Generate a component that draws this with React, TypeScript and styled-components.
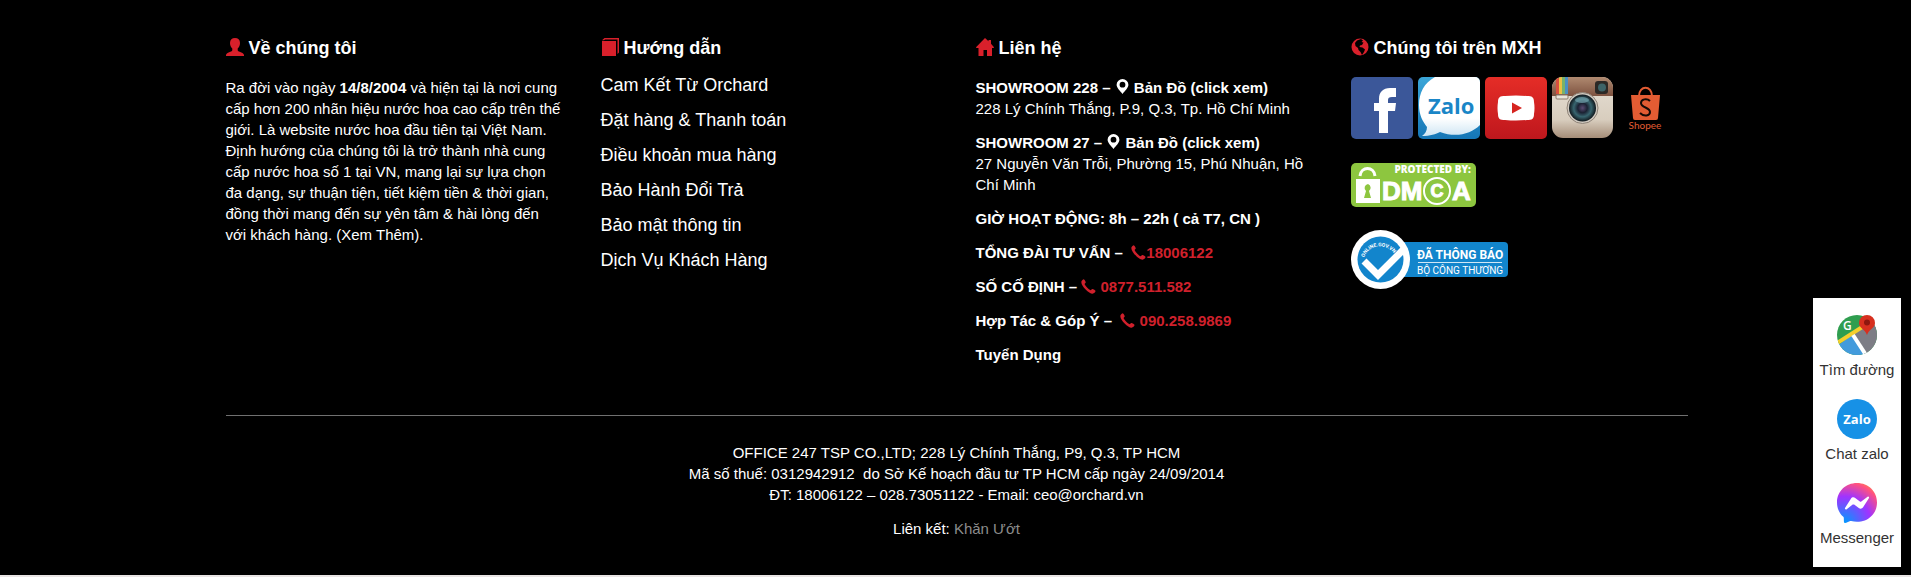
import React from "react";
import styled, { createGlobalStyle } from "styled-components";

const GlobalStyle = createGlobalStyle`
  body {
    margin: 0;
    background: #e9e5e5;
    font-family: "Liberation Sans", Arial, sans-serif;
    font-size: 15px;
    line-height: 21px;
  }
  a {
    color: inherit;
    text-decoration: none;
  }
`;

const Footer = styled.footer`
  background: #000;
  color: #fff;
  padding: 38px 20px 36px 22px;
`;

const Container = styled.div`
  max-width: 1462px;
  margin: 0 auto;
`;

const Columns = styled.div`
  display: grid;
  grid-template-columns: repeat(4, minmax(0, 1fr));
  column-gap: 38px;
  padding-bottom: 37px;
  border-bottom: 1px solid #707070;

  @media (max-width: 1100px) {
    grid-template-columns: repeat(2, minmax(0, 1fr));
    row-gap: 32px;
  }
`;

const Column = styled.section`
  min-width: 0;
`;

const Heading = styled.h4`
  display: flex;
  align-items: center;
  gap: 5px;
  margin: 0 0 19px;
  font-size: 18px;
  line-height: 20px;
  font-weight: 700;
`;

const HeadingIcon = styled.svg`
  flex: none;
  width: 18px;
  height: 18px;
  margin-bottom: 2px;
  fill: #d9202b;
`;

const Paragraph = styled.p`
  margin: 0 0 13px;
`;

const LinkList = styled.ul`
  list-style: none;
  margin: -9px 0 0;
  padding: 0;
  font-size: 18px;
  line-height: 35px;
`;

const PinIcon = styled.svg`
  width: 15px;
  height: 15px;
  vertical-align: -1px;
  fill: #fff;
`;

const PhoneLink = styled.a`
  color: #d0202c;
`;

const PhoneIcon = styled.svg`
  width: 15px;
  height: 15px;
  vertical-align: -2px;
  fill: currentColor;
`;

const SocialRow = styled.div`
  display: flex;
  gap: 5px;
  margin-bottom: 24px;

  a,
  svg {
    display: block;
  }
`;

const Badge = styled.a`
  display: block;
  margin-bottom: 23px;

  svg {
    display: block;
  }
`;

const Company = styled.div`
  padding-top: 26px;
  text-align: center;
  color: #fff;

  p:last-child {
    margin: 0;
  }
`;

const MutedLink = styled.a`
  && {
    color: #8c8c8c;
  }
`;

const ContactDock = styled.nav`
  position: fixed;
  right: 10px;
  bottom: 10px;
  display: flex;
  flex-direction: column;
  align-items: center;
  gap: 21px;
  box-sizing: border-box;
  width: 88px;
  padding: 17px 0 21px;
  background: #fff;
  color: #333;
`;

const DockLink = styled.a`
  display: flex;
  flex-direction: column;
  align-items: center;
  gap: 7px;
  line-height: 16px;
  white-space: nowrap;
`;

const Pin = () => (
  <PinIcon viewBox="0 0 15 15" aria-hidden="true">
    <path
      fillRule="evenodd"
      d="M7.500 0A5.900 5.900 0 0 0 1.600 5.800C1.600 9 5.200 12 7.500 15 9.800 12 13.400 9 13.400 5.800A5.900 5.900 0 0 0 7.500 0Zm0 2.800a2.900 2.900 0 1 1 0 5.800 2.900 2.900 0 0 1 0-5.800Z"
    />
  </PinIcon>
);

const Phone = () => (
  <PhoneIcon viewBox="0 0 15 15" aria-hidden="true">
    <path d="M.4 2.600C.8 1.300 2 .2 2.800.2c.6 0 2 2.500 1.900 3.200-.1.800-1.200 1-1.100 1.700.3 1.500 4.400 5.800 5.900 6.100.7.1 1-1 1.700-1.200.8-.2 3.500 1.400 3.400 2.100-.1 1.100-1.800 2.500-3 2.600C8.200 14.900-.4 6.500.4 2.600Z" />
  </PhoneIcon>
);

const guideLinks = [
  "Cam Kết Từ Orchard",
  "Đặt hàng & Thanh toán",
  "Điều khoản mua hàng",
  "Bảo Hành Đổi Trả",
  "Bảo mật thông tin",
  "Dịch Vụ Khách Hàng",
];

const FacebookIcon = () => (
  <svg width="62" height="62" viewBox="0 0 62 62" aria-hidden="true">
    <rect width="62" height="62" rx="5" fill="#3b5799" />
    <path
      fill="#fff"
      d="M28 56V34h-5v-8h5v-4c0-7 4-11 11-11h6v9h-4c-3 0-4 1-4 3v3h8l-1 8h-7v22Z"
    />
  </svg>
);

const ZaloIcon = () => (
  <svg width="62" height="62" viewBox="0 0 62 62" aria-hidden="true">
    <defs>
      <linearGradient id="zaloBack" x1="0" y1="0" x2="0" y2="1">
        <stop offset="0" stopColor="#3ba6d8" />
        <stop offset="1" stopColor="#1576b6" />
      </linearGradient>
      <linearGradient id="zaloBubble" x1="0" y1="0" x2="0" y2="1">
        <stop offset="0.7" stopColor="#fff" />
        <stop offset="1" stopColor="#cfe6f4" />
      </linearGradient>
      <clipPath id="zaloClip">
        <rect width="62" height="62" rx="5" />
      </clipPath>
    </defs>
    <g clipPath="url(#zaloClip)">
      <rect width="62" height="62" fill="url(#zaloBack)" />
      <path
        fill="url(#zaloBubble)"
        d="M17 0C6 6 1 16 1 28c0 10 4 17 8 22 0 4-2 7-5 9 8 0 14-2 18-4 16 6 31 2 40-7V0Z"
      />
    </g>
    <text x="10" y="37" fill="#1a86c7" fontFamily="Open Sans, sans-serif" fontSize="22" fontWeight="700">
      Zalo
    </text>
  </svg>
);

const YoutubeIcon = () => (
  <svg width="62" height="62" viewBox="0 0 62 62" aria-hidden="true">
    <defs>
      <linearGradient id="ytBack" x1="0" y1="0" x2="0" y2="1">
        <stop offset="0" stopColor="#e52d27" />
        <stop offset="1" stopColor="#bf171d" />
      </linearGradient>
    </defs>
    <rect width="62" height="62" rx="5" fill="url(#ytBack)" />
    <path
      fill="#fff"
      d="M20 19q11-1 22 0c5 0 7 1 7 6q1 6 0 12c0 5-2 6-7 6q-11 1-22 0c-5 0-7-1-7-6q-1-6 0-12c0-5 2-6 7-6Z"
    />
    <path fill="#d6241f" d="M27 25.500 37 31l-10 5.500Z" />
  </svg>
);

const InstagramIcon = () => (
  <svg width="62" height="62" viewBox="0 0 62 62" aria-hidden="true">
    <defs>
      <linearGradient id="igTop" x1="0" y1="0" x2="0" y2="1">
        <stop offset="0" stopColor="#b08a70" />
        <stop offset="1" stopColor="#7d5240" />
      </linearGradient>
      <linearGradient id="igBody" x1="0" y1="0" x2="0" y2="1">
        <stop offset="0" stopColor="#e6e0d5" />
        <stop offset="0.7" stopColor="#d8cdbe" />
        <stop offset="1" stopColor="#a58d78" />
      </linearGradient>
      <radialGradient id="igLens">
        <stop offset="0" stopColor="#5a4a72" />
        <stop offset="0.35" stopColor="#1b2233" />
        <stop offset="0.65" stopColor="#37656f" />
        <stop offset="1" stopColor="#10171c" />
      </radialGradient>
      <clipPath id="igClip">
        <rect width="61" height="61" rx="11" />
      </clipPath>
    </defs>
    <g clipPath="url(#igClip)">
      <rect width="61" height="61" fill="url(#igBody)" />
      <rect width="61" height="19" fill="url(#igTop)" />
      <rect x="4" width="3" height="17" fill="#d8503f" />
      <rect x="7" width="3" height="17" fill="#ecc043" />
      <rect x="10" width="3" height="17" fill="#79b26a" />
      <rect x="13" width="3" height="17" fill="#4b8fc4" />
      <rect x="4" y="18" width="12" height="4" rx="1" fill="#e9e4da" stroke="#8b7a6c" />
    </g>
    <rect x="43" y="4" width="13" height="13" rx="3" fill="#2c2926" />
    <circle cx="50" cy="10.500" r="4" fill="#3e6468" />
    <circle cx="30.500" cy="31" r="15.500" fill="#cfc9c0" stroke="#8f8377" />
    <circle cx="30.500" cy="31" r="13.500" fill="url(#igLens)" />
    <ellipse cx="30" cy="23" rx="7" ry="3" fill="#7fb0ba" opacity="0.6" />
  </svg>
);

const ShopeeIcon = () => (
  <svg width="62" height="62" viewBox="0 0 62 62" aria-hidden="true">
    <path fill="#e35c33" d="M12 18h29l-2 23q0 2-2 2H16q-2 0-2-2Z" />
    <path fill="none" stroke="#e35c33" strokeWidth="2" d="M20 19c0-11 13-11 13 0" />
    <path
      fill="none"
      stroke="#150a06"
      strokeWidth="2"
      d="M31 24c-3-3-9-2-9 2 0 5 9 4 9 9 0 4-6 5-10 1"
    />
    <text x="26" y="52" fill="#e35c33" fontFamily="Lato, sans-serif" fontSize="10" textAnchor="middle">
      Shopee
    </text>
  </svg>
);

const DmcaBadge = () => (
  <svg width="125" height="44" viewBox="0 0 125 44" aria-hidden="true">
    <rect width="125" height="44" rx="5" fill="#8dc63f" />
    <path fill="none" stroke="#fff" strokeWidth="3" d="M9 13C10 3 23 3 24 13" />
    <rect x="5" y="16" width="24" height="24" fill="#fff" />
    <path fill="#8dc63f" d="M17 21a4 4 0 0 0-2 7l-2 7h7l-2-7a4 4 0 0 0-1-7Z" />
    <g fill="#fff" stroke="#fff" fontFamily="Liberation Sans, Arial, sans-serif" fontWeight="700">
      <text x="120" y="10" fontSize="10" fontFamily="Open Sans, sans-serif" fontWeight="800" stroke="none" textAnchor="end">
        PROTECTED BY:
      </text>
      <text x="31" y="37" fontSize="26">
        DM
      </text>
      <text x="86" y="34" fontSize="18" textAnchor="middle">
        C
      </text>
      <text x="101" y="37" fontSize="26">
        A
      </text>
    </g>
    <circle cx="86" cy="28" r="13" fill="none" stroke="#fff" strokeWidth="2" />
  </svg>
);

const TradeBadge = () => (
  <svg width="157" height="59" viewBox="0 0 157 59" aria-hidden="true">
    <defs>
      <path id="tradeArc" d="M13 27.500a17 17 0 0 1 32 0" />
    </defs>
    <rect x="40" y="12" width="117" height="35" rx="4" fill="#1285cc" />
    <circle cx="29.500" cy="29.500" r="29.500" fill="#fff" />
    <circle cx="29.500" cy="29.500" r="23" fill="#1285cc" />
    <path fill="none" stroke="#fff" strokeWidth="7" d="M13 31l14 14 27-27" />
    <text fill="#fff" fontFamily="Roboto, sans-serif" fontSize="5" fontWeight="700">
      <textPath href="#tradeArc">ONLINE.GOV.VN</textPath>
    </text>
    <text x="66" y="29" fill="#fff" fontFamily="Roboto, sans-serif" fontSize="12" fontWeight="700">
      ĐÃ THÔNG BÁO
    </text>
    <rect x="67" y="32" width="84" height="1" fill="#cfe7f6" />
    <text x="66" y="44" fill="#fff" fontFamily="Roboto, sans-serif" fontSize="10">
      BỘ CÔNG THƯƠNG
    </text>
  </svg>
);

const MapIcon = () => (
  <svg width="40" height="40" viewBox="0 0 40 40" aria-hidden="true">
    <defs>
      <clipPath id="mapClip">
        <circle cx="20" cy="20" r="20" />
      </clipPath>
    </defs>
    <g clipPath="url(#mapClip)">
      <rect width="40" height="40" fill="#2f9e4f" />
      <path fill="#7d7d85" d="M16 20 40 0v40H28Z" />
      <path fill="#439bdc" d="M0 31l15-11 13 20H0Z" />
      <path stroke="#f5cf2c" strokeWidth="4" d="M0 28 30 9" />
      <path stroke="#fff" strokeWidth="4" d="m16 20 13 20" />
    </g>
    <text x="6" y="15" fill="#fff" fontFamily="Open Sans, sans-serif" fontSize="12" fontWeight="600">
      G
    </text>
    <path fill="#d7301f" d="M30 0a8 8 0 0 0-8 8c0 5 6 6 8 12 2-6 8-7 8-12a8 8 0 0 0-8-8Z" />
    <circle cx="30" cy="7.500" r="3" fill="#8e170f" />
  </svg>
);

const ZaloRoundIcon = () => (
  <svg width="40" height="40" viewBox="0 0 40 40" aria-hidden="true">
    <circle cx="20" cy="20" r="20" fill="#1791e6" />
    <text
      x="20"
      y="25"
      fill="#fff"
      fontFamily="Open Sans, sans-serif"
      fontSize="13"
      fontWeight="700"
      textAnchor="middle"
    >
      Zalo
    </text>
  </svg>
);

const MessengerIcon = () => (
  <svg width="40" height="40" viewBox="0 0 40 40" aria-hidden="true">
    <defs>
      <radialGradient id="messenger" cx="0.190" cy="0.990" r="1.090">
        <stop offset="0" stopColor="#09f" />
        <stop offset="0.6" stopColor="#a033ff" />
        <stop offset="0.93" stopColor="#ff5280" />
        <stop offset="1" stopColor="#ff7061" />
      </radialGradient>
    </defs>
    <path
      fill="url(#messenger)"
      d="M20 0C8.700 0 0 8.300 0 19.400c0 5.800 2.400 10.800 6.300 14.300.3.300.5.700.5 1.200l.1 3.500c0 1.200 1.200 1.900 2.300 1.400l4-1.700c.3-.2.700-.2 1-.1 1.900.5 3.800.8 5.800.8 11.300 0 20-8.300 20-19.400S31.300 0 20 0Z"
    />
    <path
      fill="#fff"
      d="m8 25.100 5.900-9.300c.9-1.500 2.900-1.900 4.300-.8l4.700 3.500c.4.300 1 .3 1.400 0l6.300-4.800c.8-.6 1.900.4 1.400 1.300l-5.900 9.300c-.9 1.500-2.900 1.900-4.300.8l-4.700-3.500c-.4-.3-1-.3-1.400 0l-6.300 4.800c-.8.600-1.900-.4-1.400-1.300Z"
    />
  </svg>
);

export default function App() {
  return (
    <>
      <GlobalStyle />
      <Footer>
        <Container>
          <Columns>
            <Column>
              <Heading>
                <HeadingIcon viewBox="0 0 18 18" aria-hidden="true">
                  <path d="M9 0c3 0 5 1.800 5 5 0 2.500-1 4.500-2.300 5.600v1.400c0 .8.500 1.100 1.300 1.400 2.500 1 5 2 5 3.600v1H0v-1c0-1.600 2.500-2.600 5-3.600.8-.3 1.300-.6 1.300-1.400v-1.400C5 9.500 4 7.500 4 5c0-3.200 2-5 5-5Z" />
                </HeadingIcon>
                Về chúng tôi
              </Heading>
              <Paragraph>
                Ra đời vào ngày <strong>14/8/2004</strong> và hiện tại là nơi cung cấp hơn 200 nhãn
                hiệu nước hoa cao cấp trên thế giới. Là website nước hoa đầu tiên tại Việt Nam. Định
                hướng của chúng tôi là trở thành nhà cung cấp nước hoa số 1 tại VN, mang lại sự lựa
                chọn đa dạng, sự thuận tiện, tiết kiệm tiền &amp; thời gian, đồng thời mang đến sự
                yên tâm &amp; hài lòng đến với khách hàng. <a href="#about">(Xem Thêm).</a>
              </Paragraph>
            </Column>

            <Column>
              <Heading>
                <HeadingIcon viewBox="0 0 18 18" aria-hidden="true">
                  <path d="M1 3h14v15H1Z" />
                  <path d="M1 2.300 3.500 0H18v14.500L16.500 16V1.500H4L3.200 2.300Z" />
                </HeadingIcon>
                Hướng dẫn
              </Heading>
              <LinkList>
                {guideLinks.map((label) => (
                  <li key={label}>
                    <a href="#guide">{label}</a>
                  </li>
                ))}
              </LinkList>
            </Column>

            <Column>
              <Heading>
                <HeadingIcon viewBox="0 0 18 18" aria-hidden="true">
                  <path d="M9 0 12.500 3.300V2H15v3.800L18 9.200 17.600 10H16v8h-5v-6H7.500v6h-5v-8H.4L0 9.200Z" />
                </HeadingIcon>
                Liên hệ
              </Heading>
              <Paragraph>
                <strong>
                  SHOWROOM 228 –{" "}
                  <a href="#map-228">
                    <Pin /> Bản Đồ (click xem)
                  </a>
                </strong>
                <br />
                228 Lý Chính Thắng, P.9, Q.3, Tp. Hồ Chí Minh
              </Paragraph>
              <Paragraph>
                <strong>
                  SHOWROOM 27 –{" "}
                  <a href="#map-27">
                    <Pin /> Bản Đồ (click xem)
                  </a>
                </strong>
                <br />
                27 Nguyễn Văn Trỗi, Phường 15, Phú Nhuận, Hồ Chí Minh
              </Paragraph>
              <Paragraph>
                <strong>GIỜ HOẠT ĐỘNG: 8h – 22h ( cả T7, CN )</strong>
              </Paragraph>
              <Paragraph>
                <strong>
                  TỔNG ĐÀI TƯ VẤN –{"\u00a0 "}
                  <PhoneLink href="tel:18006122">
                    <Phone />
                    18006122
                  </PhoneLink>
                </strong>
              </Paragraph>
              <Paragraph>
                <strong>
                  SỐ CỐ ĐỊNH –{" "}
                  <PhoneLink href="tel:0877511582">
                    <Phone /> 0877.511.582
                  </PhoneLink>
                </strong>
              </Paragraph>
              <Paragraph>
                <strong>
                  Hợp Tác &amp; Góp Ý –{"\u00a0 "}
                  <PhoneLink href="tel:0902589869">
                    <Phone /> 090.258.9869
                  </PhoneLink>
                </strong>
              </Paragraph>
              <Paragraph>
                <strong>
                  <a href="#jobs">Tuyển Dụng</a>
                </strong>
              </Paragraph>
            </Column>

            <Column>
              <Heading>
                <HeadingIcon viewBox="0 0 18 18" aria-hidden="true">
                  <circle cx="9" cy="9" r="8.500" />
                  <path
                    fill="#000"
                    d="M6 2.500 10 1l2 1.500L10.500 4l2 .5L11 7 9 7.500 8.500 9l3 .5 2.500 2-1 2.500-2 3-1.500-3-2-2-.5-2L4.500 8 4 5Z"
                  />
                </HeadingIcon>
                Chúng tôi trên MXH
              </Heading>
              <SocialRow>
                <a href="#facebook" aria-label="Facebook"><FacebookIcon /></a>
                <a href="#zalo" aria-label="Zalo"><ZaloIcon /></a>
                <a href="#youtube" aria-label="YouTube"><YoutubeIcon /></a>
                <a href="#instagram" aria-label="Instagram"><InstagramIcon /></a>
                <a href="#shopee" aria-label="Shopee"><ShopeeIcon /></a>
              </SocialRow>
              <Badge href="#dmca" aria-label="DMCA">
                <DmcaBadge />
              </Badge>
              <Badge href="#bct" aria-label="Bộ Công Thương">
                <TradeBadge />
              </Badge>
            </Column>
          </Columns>

          <Company>
            <Paragraph>
              OFFICE 247 TSP CO.,LTD; 228 Lý Chính Thắng, P9, Q.3, TP HCM
              <br />
              Mã số thuế: 0312942912&nbsp; do Sở Kế hoạch đầu tư TP HCM cấp ngày 24/09/2014
              <br />
              ĐT: 18006122 – 028.73051122 - Email: ceo@orchard.vn
            </Paragraph>
            <Paragraph>
              Liên kết: <MutedLink href="#khan-uot">Khăn Ướt</MutedLink>
            </Paragraph>
          </Company>
        </Container>
      </Footer>

      <ContactDock>
        <DockLink href="#directions">
          <MapIcon />
          <span>Tìm đường</span>
        </DockLink>
        <DockLink href="#chat-zalo">
          <ZaloRoundIcon />
          <span>Chat zalo</span>
        </DockLink>
        <DockLink href="#messenger">
          <MessengerIcon />
          <span>Messenger</span>
        </DockLink>
      </ContactDock>
    </>
  );
}
